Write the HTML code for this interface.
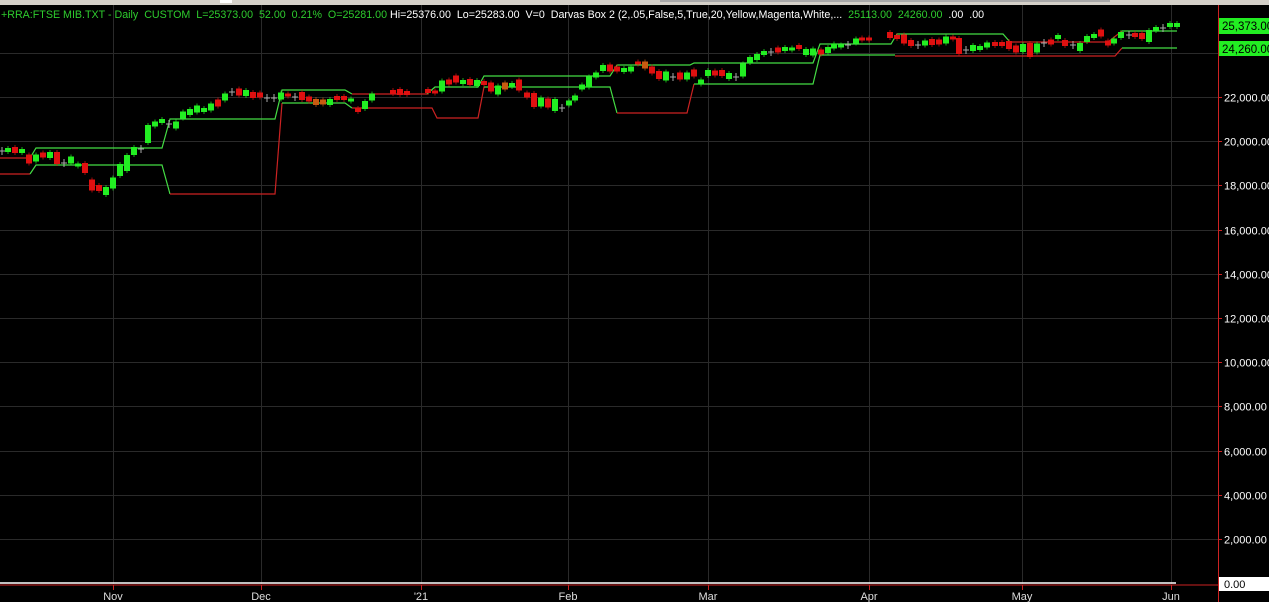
<!DOCTYPE html><html><head><meta charset="utf-8"><style>
html,body{margin:0;padding:0;background:#000;width:1269px;height:602px;overflow:hidden}
svg{display:block;font-family:"Liberation Sans",sans-serif}
</style></head><body>
<svg id="s" width="1269" height="602" xmlns="http://www.w3.org/2000/svg">
<rect width="1269" height="602" fill="#000"/>
<rect x="0" y="0" width="1269" height="5" fill="#d4d0c8"/>
<rect x="220" y="0" width="12" height="3" fill="#fff"/>
<rect x="660" y="0" width="450" height="2" fill="#a8a8a8"/>
<g id="grid" stroke="#2a2a2a" stroke-width="1"></g>
<g id="lines" fill="none" stroke-width="1.2">
<polyline stroke="#cc2222" points="0,158 28,158"/>
<polyline stroke="#cc2222" points="0,174 30,174"/>
<polyline stroke="#44dd44" points="30,158 36,148 162,148 170,119 275,119 282,90 345,90 352,94"/>
<polyline stroke="#cc2222" points="352,94 427,94"/>
<polyline stroke="#44dd44" points="30,174 36,165 162,165 170,194"/>
<polyline stroke="#cc2222" points="170,194 275,194 282,103"/>
<polyline stroke="#44dd44" points="282,103 345,103 352,108"/>
<polyline stroke="#cc2222" points="352,108 432,108 437,118 478,118 484,87"/>
<polyline stroke="#44dd44" points="427,94 435,87 478,87 484,76 610,76 617,65 690,65 694,63 813,63 820,44 891,44 897,34 1003,34 1010,42"/>
<polyline stroke="#cc2222" points="1010,42 1108,42 1122,31"/>
<polyline stroke="#44dd44" points="1122,31 1177,31"/>
<polyline stroke="#44dd44" points="484,87 610,87 617,113"/>
<polyline stroke="#cc2222" points="617,113 687,113 694,84"/>
<polyline stroke="#44dd44" points="694,84 813,84 820,55 895,55"/>
<polyline stroke="#cc2222" points="895,56 1115,56 1122,48"/>
<polyline stroke="#44dd44" points="1122,48 1177,48"/>
</g>
<g id="c"></g>
<line x1="0" y1="583" x2="1176" y2="583" stroke="#fff" stroke-width="1.5"/>
<line x1="0" y1="585" x2="1218" y2="585" stroke="#cc2222" stroke-width="1"/>
<line x1="1218.5" y1="5" x2="1218.5" y2="602" stroke="#cc2222" stroke-width="1"/>
<g id="ax" font-size="11" fill="#fff"></g>
<rect x="1219" y="18" width="50" height="16" fill="#22ee22"/>
<text x="1222" y="30" font-size="11.5" fill="#000">25,373.00</text>
<rect x="1219" y="41" width="50" height="15" fill="#22ee22"/>
<text x="1222" y="53" font-size="11.5" fill="#000">24,260.00</text>
<rect x="1219" y="577" width="50" height="14" fill="#fff"/>
<text x="1224" y="588" font-size="11" fill="#000">0.00</text>
<g id="mo" font-size="11" fill="#ddd"></g>
<text x="1" y="18" font-size="10.7" fill="#2ecc2e" xml:space="preserve">+RRA:FTSE MIB.TXT - Daily  CUSTOM  L=25373.00  52.00  0.21%  O=25281.00 <tspan fill="#fff">Hi=25376.00  Lo=25283.00  V=0  Darvas Box 2 (2,.05,False,5,True,20,Yellow,Magenta,White,...</tspan>  25113.00  24260.00 <tspan fill="#fff"> .00  .00</tspan></text>
</svg>
<script>
var NS="http://www.w3.org/2000/svg";
function el(p,t,a,txt){var e=document.createElementNS(NS,t);for(var k in a)e.setAttribute(k,a[k]);if(txt)e.textContent=txt;document.getElementById(p).appendChild(e);}
var vx=[113,261,421,568,708,869,1022,1171];
vx.forEach(function(x){el("grid","line",{x1:x+.5,y1:5,x2:x+.5,y2:584});});
for(var p=2000;p<=24000;p+=2000){var y=Math.round(583.2-p*0.0221)+.5;el("grid","line",{x1:0,y1:y,x2:1218,y2:y});
el("ax","line",{x1:1218,y1:y,x2:1222,y2:y,stroke:"#cc2222"});
if(p<24000)el("ax","text",{x:1224,y:y+4},p.toLocaleString("en-US")+".00");}
var mo=["Nov","Dec","'21","Feb","Mar","Apr","May","Jun"];
vx.forEach(function(x,i){el("mo","text",{x:x,y:600,"text-anchor":"middle"},mo[i]);el("grid","line",{x1:x+.5,y1:585,x2:x+.5,y2:590,stroke:"#cc2222"});});
var C=[[2,151,'x'],[8,150,'g',2],[15,150,'r',4],[22,151,'g',2],[29,159,'r',7],[36,158,'g',5],[43,155,'r',3],[50,155,'g',4],[57,158,'r',10],[64,163,'x'],[71,160,'g',5],[78,165,'g',1],[85,168,'r',8],[92,185,'r',9],[99,188,'r',4],[106,191,'g',6],[113,183,'g',9],[120,170,'g',10],[127,163,'g',14],[134,151,'g',6],[141,149,'x'],[148,134,'g',16],[155,124,'g',3],[162,121,'g',2],[169,124,'x'],[176,125,'g',5],[183,115,'g',5],[190,112,'g',4],[197,109,'g',5],[204,110,'g',2],[211,107,'g',5],[218,103,'r',5],[225,97,'g',5],[232,92,'x'],[239,92,'r',5],[246,93,'g',4],[253,95,'r',4],[260,95,'r',3],[267,98,'x'],[274,98,'x'],[281,96,'g',5],[288,95,'r',1],[295,97,'x'],[302,96,'r',6],[309,99,'r',3],[316,102,'o',4],[323,102,'o',3],[330,102,'g',4],[337,98,'r',2],[344,98,'r',2],[351,100,'g',1],[358,110,'r',2],[365,105,'g',6],[372,97,'g',5],[393,92,'r',2],[400,92,'r',4],[407,93,'r',2],
[428,91,'r',2],[435,92,'r',1],[442,86,'g',9],[449,82,'r',3],[456,79,'r',5],[463,82,'g',2],[470,82,'r',4],[477,83,'g',4],[484,83,'r',2],[491,87,'r',7],[498,90,'g',7],[505,86,'o',5],[512,85,'g',2],[519,85,'r',9],[527,95,'r',3],[534,100,'r',12],[541,102,'g',7],[548,103,'r',7],[555,105,'g',10],[562,108,'x'],[569,103,'g',3],[575,98,'g',3],[582,87,'g',3],[589,82,'g',9],[596,75,'g',3],[603,68,'g',4],[610,68,'r',5],[617,69,'r',3],[624,70,'g',2],[631,69,'g',3],[638,63,'r',1],[645,65,'o',5],[652,70,'r',5],[659,75,'r',6],[666,76,'g',7],[673,77,'x'],[680,76,'r',5],[687,76,'g',5],[694,73,'r',5],[701,82,'g',3],[708,73,'g',4],[715,73,'r',3],[722,73,'r',4],[729,76,'g',4],[736,77,'x'],[743,70,'g',11],[750,60,'g',4],[757,57,'g',4],[764,53,'g',2],[771,52,'x'],[778,50,'r',3],[785,49,'g',2],[792,49,'g',1],[799,47,'r',2],[806,52,'g',4],[813,52,'g',5],[821,52,'r',3],[828,50,'g',4],[834,46,'g',3],[841,46,'g',1],[848,45,'x'],[856,41,'g',3],[862,39,'r',1],[869,39,'r',1],[890,35,'r',4],[897,37,'r',2],[904,39,'r',7],[911,43,'r',4],[918,45,'x'],[925,43,'g',3],[932,42,'r',4],[939,42,'r',3],[946,40,'g',5],[953,38,'r',1],[959,46,'r',14],[966,50,'x'],[973,48,'g',4],[980,48,'g',2],[987,45,'g',3],[995,44,'r',2],[1002,44,'r',2],[1009,45,'r',6],[1016,49,'r',5],[1023,48,'g',6],[1030,50,'r',12],[1037,48,'g',7],[1044,43,'x'],[1051,42,'r',3],[1058,37,'g',2],[1065,43,'r',4],[1073,45,'x'],[1080,47,'g',6],[1087,39,'g',4],[1094,36,'g',2],[1101,33,'r',5],[1108,43,'r',3],[1114,41,'g',3],[1121,35,'g',4],[1129,35,'x'],[1135,35,'r',2],[1142,36,'r',4],[1149,36,'g',10],[1156,29,'g',2],[1163,28,'x'],[1170,25,'g',2],[1177,25,'g',2]];
var col={g:"#22ee22",r:"#e01010",o:"#c85a10",x:"#999"};
C.forEach(function(c){var x=c[0],y=c[1],t=c[2],h=c[3]||1;
if(t=='x'){el("c","line",{x1:x-3,y1:y,x2:x+3,y2:y,stroke:"#aaa"});el("c","line",{x1:x,y1:y-4,x2:x,y2:y+4,stroke:"#aaa"});return;}
el("c","line",{x1:x,y1:y-h/2-3,x2:x,y2:y+h/2+3,stroke:col[t],"stroke-opacity":.7});
el("c","rect",{x:x-3,y:y-h/2-1,width:6,height:h+2,fill:col[t]});});
</script>
</body></html>
